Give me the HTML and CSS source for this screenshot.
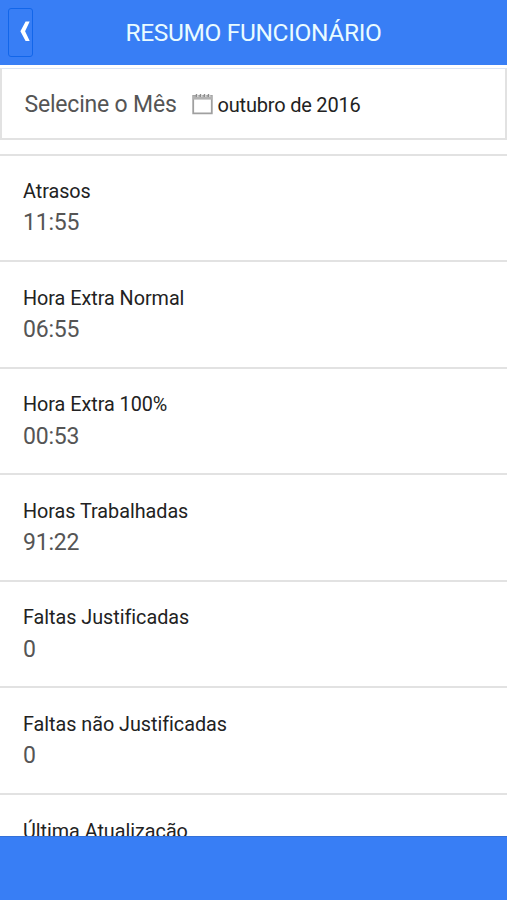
FILE: index.html
```
<!DOCTYPE html>
<html lang="pt-BR">
<head>
<meta charset="utf-8">
<meta name="viewport" content="width=device-width, initial-scale=1">
<title>Resumo Funcionário</title>
<link rel="stylesheet" href="styles.css">
</head>
<body>
<header class="bar">
    <button class="back" aria-label="Voltar">
        <svg width="10" height="21" viewBox="0 0 10 21"><path d="M5.6 0.5 H9.7 L5.1 10.2 L9.7 20 H5.6 L0.4 10.2 Z" fill="#fff"/></svg>
    </button>
    <h1 class="title">RESUMO FUNCIONÁRIO</h1>
</header>

<main class="content">
    <div class="month">
        <span class="month-label">Selecine o Mês</span>
        <svg class="calendar" width="21" height="22" viewBox="0 0 21 22">
            <path d="M1.2 3 H19.8 V20.3 H1.2 Z" fill="#fff" stroke="#a0a0a0" stroke-width="1.8"/>
            <path d="M1 2.8 H20 V6.6 H1 Z" fill="#b2b2b2"/>
            <path d="M4.5 1 V4 M8.5 1 V4 M12.5 1 V4 M16.5 1 V4" stroke="#8c8c8c" stroke-width="1.4"/>
            <path d="M5.8 1.5 V4 M9.8 1.5 V4 M13.8 1.5 V4 M17.8 1.5 V4" stroke="#e8e8e8" stroke-width="1"/>
        </svg>
        <span class="month-value">outubro de 2016</span>
    </div>

    <div class="list">
        <div class="item">
            <h2>Atrasos</h2>
            <p>11:55</p>
        </div>
        <div class="item">
            <h2>Hora Extra Normal</h2>
            <p>06:55</p>
        </div>
        <div class="item">
            <h2>Hora Extra 100%</h2>
            <p>00:53</p>
        </div>
        <div class="item">
            <h2>Horas Trabalhadas</h2>
            <p>91:22</p>
        </div>
        <div class="item">
            <h2>Faltas Justificadas</h2>
            <p>0</p>
        </div>
        <div class="item">
            <h2>Faltas não Justificadas</h2>
            <p>0</p>
        </div>
        <div class="item">
            <h2>Última Atualização</h2>
        </div>
    </div>
</main>

<footer class="footer"></footer>
</body>
</html>
```

FILE: styles.css
```
* {
    box-sizing: border-box;
}

body {
    font-family: Roboto, sans-serif;
    font-variant-ligatures: common-ligatures;
    background: #fff;
    color: #222;
    margin: 0;
    height: 900px;
    display: flex;
    flex-direction: column;
    overflow: hidden;
}

/* header */
.bar {
    flex: none;
    height: 65px;
    display: grid;
    grid-template-columns: 42px 1fr 42px;
    align-items: center;
    background: #387ef5;
}

.back {
    width: 25px;
    height: 49px;
    margin: 0 0 0 8px;
    padding: 0 2px 3px 0;
    display: flex;
    align-items: center;
    justify-content: flex-end;
    background: #387ef5;
    border: 1px solid #1266ea;
    border-radius: 3px;
}

.title {
    margin: 0;
    font-size: 24.5px;
    font-weight: 400;
    line-height: 65px;
    letter-spacing: -0.36px;
    text-align: center;
    color: #e9fbff;
    white-space: nowrap;
}

/* content */
.content {
    flex: 1;
    min-height: 0;
    overflow: hidden;
}

.month {
    height: 72px;
    margin-top: 3px;
    padding: 1px 0 0 22.5px;
    display: flex;
    align-items: center;
    border: 2px solid #e2e2e2;
    border-top: 1px solid #dbe5f5;
    white-space: nowrap;
}

.month-label {
    font-size: 23px;
    letter-spacing: -0.2px;
    color: #555;
}

.calendar {
    margin: 0 5px 0 15px;
}

.month-value {
    margin-top: 1px;
    font-size: 20px;
    letter-spacing: -0.2px;
}

.list {
    margin-top: 13.5px;
}

.item {
    height: 106.6px;
    padding: 24.6px 23px 0;
    border-top: 2px solid #e2e2e2;
}

.item h2 {
    margin: 0;
    font-size: 19.8px;
    font-weight: 400;
    line-height: 24px;
    letter-spacing: -0.03px;
}

.item p {
    margin: 4.4px 0 0;
    font-size: 23px;
    line-height: 30px;
    letter-spacing: -0.2px;
    color: #555;
}

.footer {
    flex: none;
    height: 64px;
    background: #387ef5;
    border-top: 1px solid #3471d8;
}
```
